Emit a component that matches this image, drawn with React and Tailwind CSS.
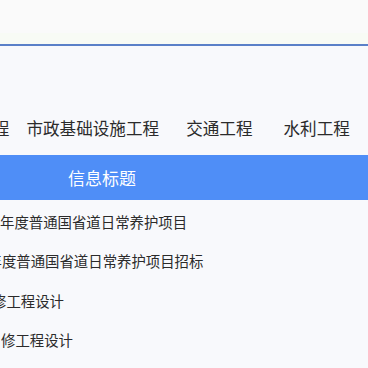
const navItems = [
    { label: '房建工程', cls: '-ml-[57px]' },
    { label: '市政基础设施工程', cls: 'ml-[17px]' },
    { label: '交通工程', cls: 'ml-[27px]' },
    { label: '水利工程', cls: 'ml-[31px]' },
];

const rows = [
    { title: '年度普通国省道日常养护项目', cls: 'ml-0' },
    { title: '年度普通国省道日常养护项目招标', cls: '-ml-[12.5px]' },
    { title: '修工程设计', cls: '-ml-[8px]' },
    { title: '修工程设计', cls: 'ml-[1px]' },
];

export default function App() {
    return (
        <div className="w-[368px] h-[368px] overflow-hidden bg-[#f8f9fc] text-[#2b2b2b] font-['Noto_Sans_CJK_SC','Noto_Sans',sans-serif]">
            <header className="flex flex-col">
                <div className="h-[33px] bg-[#fafafa]" />
                <div className="h-[11px] bg-[#f8fbf5]" />
                <div className="h-[2px] bg-[#5a80c8]" />
            </header>

            <nav className="h-[109px] pt-[70px] flex whitespace-nowrap text-[16.6px] leading-[24px]">
                {navItems.map((item) => (
                    <span key={item.label} className={`shrink-0 ${item.cls}`}>{item.label}</span>
                ))}
            </nav>

            <div className="h-[45px] bg-[#4f8ef7] flex items-center pl-[68px] text-white text-[17px] leading-[24px]">
                信息标题
            </div>

            <ul className="pt-[2px] text-[14.4px] leading-[20px]">
                {rows.map((row, i) => (
                    <li key={i} className="h-[39.5px] flex items-center whitespace-nowrap">
                        <span className={`shrink-0 ${row.cls}`}>{row.title}</span>
                    </li>
                ))}
            </ul>
        </div>
    );
}
